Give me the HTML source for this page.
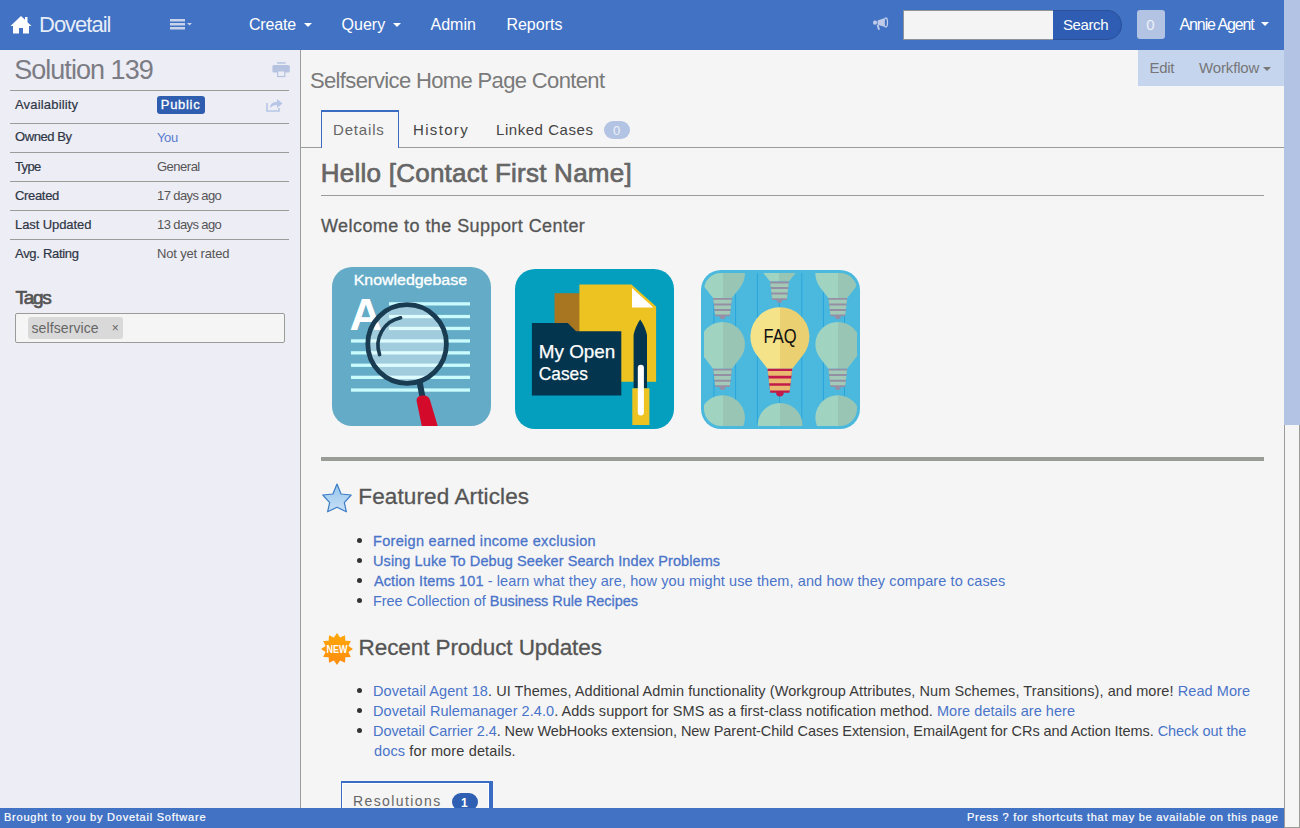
<!DOCTYPE html>
<html><head><meta charset="utf-8">
<style>
*{box-sizing:border-box}
html,body{margin:0;padding:0;width:1300px;height:828px;overflow:hidden;background:#f5f5f5;font-family:"Liberation Sans",sans-serif}
.a{position:absolute}
.t{position:absolute;line-height:1;white-space:nowrap}
.sb{-webkit-text-stroke:0.3px currentColor}
.sl{-webkit-text-stroke:0.2px currentColor}
.sh{-webkit-text-stroke:0.7px currentColor}
#nav{left:0;top:0;width:1284px;height:50px;background:#4272c4}
#side{left:0;top:50px;width:300px;height:758px;background:#ededf5}
#sideb{left:300px;top:50px;width:1px;height:758px;background:#9a9d97}
.hl{position:absolute;height:1px;background:#9a9d97}
.lab{font-size:13px;color:#2f3746}
.val{font-size:13px;color:#555}
.caret{position:absolute;width:0;height:0;border-left:4px solid transparent;border-right:4px solid transparent;border-top:4px solid #fff}
#foot{left:0;top:808px;width:1284px;height:20px;background:#4272c4}
#sbar{left:1284px;top:0;width:16px;height:828px;background:#f5f5f5;border-left:1px solid #9a9d97;border-right:1px solid #9a9d97;border-bottom:1px solid #9a9d97}
#thumb{left:1284px;top:0;width:16px;height:425px;background:#b3c3e3}
.li{font-size:14.5px;color:#3a3a3a}
.lk{color:#4a74c9}
.bul{position:absolute;width:5px;height:5px;border-radius:50%;background:#333}
</style></head><body>
<!-- NAVBAR -->
<div id="nav" class="a"></div>
<svg class="a" style="left:10px;top:16px" width="22" height="18" viewBox="0 0 22 18"><path d="M11 0 L0.5 10 L3 10 L3 17.5 L9 17.5 L9 12 L13 12 L13 17.5 L19 17.5 L19 10 L21.5 10 L17.5 6.2 L17.5 1 L15 1 L15 3.8 Z" fill="#fff"/></svg>
<div class="t" style="left:39.00px;top:13.7px;font-size:22px;color:rgba(255,255,255,0.88);letter-spacing:-1.011px">Dovetail</div>
<svg class="a" style="left:170px;top:19px" width="24" height="12" viewBox="0 0 24 12"><g fill="#c8d2ea"><rect x="0" y="0" width="15" height="2.5"/><rect x="0" y="4" width="15" height="2.5"/><rect x="0" y="8" width="15" height="2.5"/><path d="M17 4 L22 4 L19.5 6.5Z"/></g></svg>
<div class="t" style="left:249.00px;top:17.4px;font-size:16px;color:#fff;letter-spacing:-0.200px">Create</div>
<div class="caret" style="left:304px;top:23px"></div>
<div class="t" style="left:341.60px;top:17.4px;font-size:16px;color:#fff;letter-spacing:-0.000px">Query</div>
<div class="caret" style="left:393px;top:23px"></div>
<div class="t" style="left:430.50px;top:17.4px;font-size:16px;color:#fff;letter-spacing:-0.000px">Admin</div>
<div class="t" style="left:506.40px;top:17.4px;font-size:16px;color:#fff;letter-spacing:0.005px">Reports</div>
<svg class="a" style="left:873px;top:17px" width="16" height="13" viewBox="0 0 16 13"><g fill="#bfcbe8"><rect x="0" y="3.4" width="4" height="4.4" rx="1.8"/><path d="M4.6 3.4 L11.2 1.2 L11.2 9.8 L4.6 7.8Z"/><path d="M3.7 8 L5.6 8 L7 12.7 L5 12.7Z"/></g><ellipse cx="12.8" cy="5.5" rx="1.7" ry="4.5" fill="none" stroke="#bfcbe8" stroke-width="1.3"/></svg>
<div class="a" style="left:903px;top:10px;width:151px;height:30px;background:#f4f4f4;border:1px solid #8f949a"></div>
<div class="a" style="left:1053px;top:10px;width:69px;height:30px;background:#2e5db3;border:1px solid #2a519a;border-left:none;border-radius:0 15px 15px 0"></div>
<div class="t" style="left:1063.00px;top:17.3px;font-size:15px;color:#fff;letter-spacing:-0.400px">Search</div>
<div class="a" style="left:1137px;top:10px;width:28px;height:29px;background:#b3c3e3;border-radius:3px"></div>
<div class="t" style="left:1146.2px;top:16.7px;font-size:15px;color:#eef1f8">0</div>
<div class="t" style="left:1179.50px;top:17.2px;font-size:16px;color:#fff;letter-spacing:-1.100px">Annie Agent</div>
<div class="caret" style="left:1261px;top:22px"></div>

<!-- SIDEBAR -->
<div id="side" class="a"></div>
<div id="sideb" class="a"></div>
<div class="t" style="left:14.20px;top:57px;font-size:27px;color:#7c7c84;letter-spacing:-0.965px">Solution 139</div>
<svg class="a" style="left:272px;top:62px" width="18" height="16" viewBox="0 0 18 16"><g fill="#b6c3e0"><rect x="5" y="0.2" width="8.6" height="1.5"/><rect x="0.4" y="2.9" width="17.4" height="7.7" rx="1.5"/></g><rect x="5.6" y="8.9" width="7.2" height="5.6" fill="#ededf5" stroke="#b6c3e0" stroke-width="1.2"/></svg>
<div class="hl" style="left:10px;top:90px;width:279px"></div>
<div class="hl" style="left:10px;top:123px;width:279px"></div>
<div class="hl" style="left:10px;top:152px;width:279px"></div>
<div class="hl" style="left:10px;top:181px;width:279px"></div>
<div class="hl" style="left:10px;top:210px;width:279px"></div>
<div class="hl" style="left:10px;top:239px;width:279px"></div>
<div class="t lab sl" style="left:15.00px;top:98.2px;letter-spacing:0.176px">Availability</div>
<div class="a" style="left:157px;top:96px;width:48px;height:18px;background:#2f5db0;border-radius:3px"></div>
<div class="t sb" style="left:160.8px;top:97.6px;font-size:13px;color:#fff;letter-spacing:0.7px">Public</div>
<svg class="a" style="left:266px;top:98px" width="17" height="14" viewBox="0 0 17 14"><path d="M1 5 L1 13 L13 13 L13 10" fill="none" stroke="#b6c6e6" stroke-width="1.6"/><path d="M4 10 C4 5 8 4 11 4 L11 1 L16.5 5.5 L11 10 L11 7 C8 7 6 8 4 10Z" fill="#b6c6e6"/></svg>
<div class="t lab sl" style="left:15.00px;top:130.4px;letter-spacing:-0.427px">Owned By</div>
<div class="t val" style="left:157px;top:130.9px;color:#5a7bd0;letter-spacing:-0.4px">You</div>
<div class="t lab sl" style="left:15.00px;top:160.4px;letter-spacing:-0.669px">Type</div>
<div class="t val" style="left:157.00px;top:160.4px;letter-spacing:-0.500px">General</div>
<div class="t lab sl" style="left:15.00px;top:189px;letter-spacing:-0.328px">Created</div>
<div class="t val" style="left:157.00px;top:189px;letter-spacing:-0.600px">17 days ago</div>
<div class="t lab sl" style="left:15.00px;top:218.2px;letter-spacing:-0.085px">Last Updated</div>
<div class="t val" style="left:157.00px;top:218.2px;letter-spacing:-0.600px">13 days ago</div>
<div class="t lab sl" style="left:15.00px;top:247.3px;letter-spacing:-0.300px">Avg. Rating</div>
<div class="t val" style="left:157.00px;top:247.3px;letter-spacing:-0.163px">Not yet rated</div>
<div class="t sh" style="left:15.50px;top:287.9px;font-size:19px;color:#555;letter-spacing:-1.333px">Tags</div>
<div class="a" style="left:15px;top:313px;width:270px;height:30px;background:#f5f5f5;border:1px solid #9a9d97;border-radius:2px"></div>
<div class="a" style="left:28px;top:317px;width:95px;height:22px;background:#d9d9d9;border-radius:3px"></div>
<div class="t" style="left:31.50px;top:320.6px;font-size:14px;color:#666;letter-spacing:0.100px">selfservice</div>
<div class="t" style="left:111.8px;top:321.8px;font-size:12px;color:#666">×</div>

<!-- MAIN -->
<div class="t" style="left:310.00px;top:70.1px;font-size:22px;color:#7a7a7a;letter-spacing:-0.643px">Selfservice Home Page Content</div>
<div class="a" style="left:1138px;top:50px;width:146px;height:36px;background:#c5d5ee"></div>
<div class="t" style="left:1149.50px;top:60.3px;font-size:15px;color:#777;letter-spacing:-0.333px">Edit</div>
<div class="t" style="left:1199.00px;top:60.3px;font-size:15px;color:#777;letter-spacing:-0.142px">Workflow</div>
<div class="caret" style="left:1263px;top:67px;border-top-color:#777"></div>

<div class="hl" style="left:301px;top:147px;width:983px"></div>
<div class="a" style="left:321px;top:110px;width:78px;height:38px;background:#f5f5f5;border:1px solid #3a6cc4;border-top:2px solid #3a6cc4;border-bottom:none"></div>
<div class="t" style="left:333.00px;top:122.3px;font-size:15px;color:#666;letter-spacing:0.833px">Details</div>
<div class="t" style="left:413.00px;top:121.5px;font-size:15px;color:#444;letter-spacing:1.328px">History</div>
<div class="t" style="left:496.00px;top:121.5px;font-size:15px;color:#444;letter-spacing:0.545px">Linked Cases</div>
<div class="a" style="left:604px;top:121px;width:26px;height:18px;background:#b3c3e3;border-radius:9px"></div>
<div class="t" style="left:613px;top:124px;font-size:13px;color:#eef1f8">0</div>

<div class="t sh" style="left:320.80px;top:159.5px;font-size:26px;color:#666;letter-spacing:0.240px">Hello [Contact First Name]</div>
<div class="hl" style="left:321px;top:195px;width:943px"></div>
<div class="t sb" style="left:321.00px;top:216.7px;font-size:18px;color:#555;letter-spacing:0.429px">Welcome to the Support Center</div>

<!-- ICONS placeholder -->
<svg class="a" style="left:332px;top:267px" width="159" height="159" viewBox="0 0 159 159">
<defs><clipPath id="kbc"><rect width="159" height="159" rx="20"/></clipPath><clipPath id="lensc"><circle cx="75.1" cy="77" r="39"/></clipPath></defs>
<g clip-path="url(#kbc)">
<rect width="159" height="159" fill="#63abc7"/>
<text x="21.7" y="17.8" font-size="15.4" fill="#fff" stroke="#fff" stroke-width="0.35" font-family="Liberation Sans" textLength="113.3" lengthAdjust="spacingAndGlyphs">Knowledgebase</text>
<text x="17.5" y="62.7" font-size="45" font-weight="bold" fill="#fff" font-family="Liberation Sans">A</text>
<g fill="#c9fbfd">
<rect x="57" y="35.2" width="81" height="3.3"/>
<rect x="57" y="47.9" width="81" height="3.3"/>
<rect x="57" y="59.8" width="81" height="3.3"/>
<rect x="19" y="72.3" width="119" height="3.3"/>
<rect x="19" y="84.2" width="119" height="3.3"/>
<rect x="19" y="96.6" width="119" height="3.3"/>
<rect x="19" y="108.7" width="119" height="3.3"/>
<rect x="19" y="121.4" width="119" height="3.3"/>
</g>
<circle cx="75.1" cy="77" r="39.3" fill="#ffffff" fill-opacity="0.4"/>
<circle cx="75.1" cy="77" r="39.3" fill="none" stroke="#1a3c52" stroke-width="4.8"/>
<path d="M68.6 50.8 A28 28 0 0 0 47.6 87.6" fill="none" stroke="#1a3c52" stroke-width="3.6" stroke-linecap="round"/>
<path d="M84.5 115.5 L90.8 115.5 L93.5 130 L87.5 130 Z" fill="#1a3c52"/>
<path d="M84.8 135 Q83.5 129.5 90 128.6 Q96.5 127.8 98 133 L106 160 L90 160 Z" fill="#d40a2a"/>
</g>
</svg>

<svg class="a" style="left:515px;top:269px" width="159" height="160" viewBox="0 0 159 160">
<rect width="159" height="160" rx="20" fill="#049fbe"/>
<rect x="39.5" y="24.2" width="26" height="40" fill="#a87520"/>
<path d="M64.4 15.6 H116.4 L141.1 37.6 V112.8 H64.4Z" fill="#ecc321"/>
<path d="M117 19 V38.5 H138.4Z" fill="#ffffff"/>
<path d="M16.9 54 H52.8 L61 62.2 H106.3 V126.6 H16.9Z" fill="#03354f"/>
<text x="23.8" y="88.8" font-size="18.5" fill="#fff" stroke="#fff" stroke-width="0.25" font-family="Liberation Sans" textLength="76.5" lengthAdjust="spacingAndGlyphs">My Open</text>
<text x="23.8" y="111" font-size="18.5" fill="#fff" stroke="#fff" stroke-width="0.25" font-family="Liberation Sans" textLength="49" lengthAdjust="spacingAndGlyphs">Cases</text>
<path d="M118.6 119.3 V66 Q120 58 125.2 50.4 Q130.5 58 132 66 V119.3Z" fill="#03354f"/>
<rect x="117.3" y="119.3" width="17.1" height="36.7" fill="#ecc321"/>
<rect x="122.8" y="95.8" width="6.1" height="50.6" rx="3" fill="#ffffff"/>
</svg>

<svg class="a" style="left:701px;top:270px" width="159" height="159" viewBox="0 0 159 159">
<defs><clipPath id="fqc"><rect x="3" y="3" width="153" height="153" rx="17"/></clipPath><linearGradient id="pg" x1="0" x2="1" y1="0" y2="0"><stop offset="0.5" stop-color="#a1d3c1"/><stop offset="0.5" stop-color="#99c5b4"/></linearGradient><linearGradient id="yg" x1="0" x2="1" y1="0" y2="0"><stop offset="0.5" stop-color="#f5e38a"/><stop offset="0.5" stop-color="#ebd072"/></linearGradient></defs>
<rect width="159" height="159" rx="20" fill="#4bb9de"/>
<g clip-path="url(#fqc)">
<rect x="12.4" y="0" width="1" height="159" fill="#2aa5dc"/>
<rect x="34.1" y="0" width="1" height="159" fill="#2aa5dc"/>
<rect x="55.9" y="0" width="1" height="159" fill="#2aa5dc"/>
<rect x="78.0" y="0" width="1" height="159" fill="#2aa5dc"/>
<rect x="100.3" y="0" width="1" height="159" fill="#2aa5dc"/>
<rect x="121.9" y="0" width="1" height="159" fill="#2aa5dc"/>
<rect x="143.0" y="0" width="1" height="159" fill="#2aa5dc"/>
<path d="M12.10 28.00 L4.20 17.90 A22.40 22.40 0 1 1 38.80 17.90 L30.90 28.00 Z" fill="url(#pg)"/>
<path d="M12.10 28.00 L30.90 28.00 L28.80 46.30 L14.20 46.30 Z" fill="#958fa6"/>
<circle cx="21.50" cy="46.30" r="2.9" fill="#958fa6"/>
<path d="M12.31 29.80 L30.69 29.80 L30.28 33.40 L12.72 33.40Z" fill="#a3cab7"/>
<path d="M12.95 35.40 L30.05 35.40 L29.64 39.00 L13.36 39.00Z" fill="#a3cab7"/>
<path d="M13.59 41.00 L29.41 41.00 L29.00 44.60 L14.00 44.60Z" fill="#a3cab7"/>
<path d="M12.10 98.70 L4.20 88.60 A22.40 22.40 0 1 1 38.80 88.60 L30.90 98.70 Z" fill="url(#pg)"/>
<path d="M12.10 98.70 L30.90 98.70 L28.80 117.00 L14.20 117.00 Z" fill="#958fa6"/>
<circle cx="21.50" cy="117.00" r="2.9" fill="#958fa6"/>
<path d="M12.31 100.50 L30.69 100.50 L30.28 104.10 L12.72 104.10Z" fill="#a3cab7"/>
<path d="M12.95 106.10 L30.05 106.10 L29.64 109.70 L13.36 109.70Z" fill="#a3cab7"/>
<path d="M13.59 111.70 L29.41 111.70 L29.00 115.30 L14.00 115.30Z" fill="#a3cab7"/>
<path d="M12.10 171.90 L4.20 161.80 A22.40 22.40 0 1 1 38.80 161.80 L30.90 171.90 Z" fill="url(#pg)"/>
<path d="M12.10 171.90 L30.90 171.90 L28.80 190.20 L14.20 190.20 Z" fill="#958fa6"/>
<circle cx="21.50" cy="190.20" r="2.9" fill="#958fa6"/>
<path d="M12.31 173.70 L30.69 173.70 L30.28 177.30 L12.72 177.30Z" fill="#a3cab7"/>
<path d="M12.95 179.30 L30.05 179.30 L29.64 182.90 L13.36 182.90Z" fill="#a3cab7"/>
<path d="M13.59 184.90 L29.41 184.90 L29.00 188.50 L14.00 188.50Z" fill="#a3cab7"/>
<path d="M69.10 11.60 L61.20 1.50 A22.40 22.40 0 1 1 95.80 1.50 L87.90 11.60 Z" fill="url(#pg)"/>
<path d="M69.10 11.60 L87.90 11.60 L85.80 29.90 L71.20 29.90 Z" fill="#958fa6"/>
<circle cx="78.50" cy="29.90" r="2.9" fill="#958fa6"/>
<path d="M69.31 13.40 L87.69 13.40 L87.28 17.00 L69.72 17.00Z" fill="#a3cab7"/>
<path d="M69.95 19.00 L87.05 19.00 L86.64 22.60 L70.36 22.60Z" fill="#a3cab7"/>
<path d="M70.59 24.60 L86.41 24.60 L86.00 28.20 L71.00 28.20Z" fill="#a3cab7"/>
<path d="M69.70 179.70 L61.80 169.60 A22.40 22.40 0 1 1 96.40 169.60 L88.50 179.70 Z" fill="url(#pg)"/>
<path d="M69.70 179.70 L88.50 179.70 L86.40 198.00 L71.80 198.00 Z" fill="#958fa6"/>
<circle cx="79.10" cy="198.00" r="2.9" fill="#958fa6"/>
<path d="M69.91 181.50 L88.29 181.50 L87.88 185.10 L70.32 185.10Z" fill="#a3cab7"/>
<path d="M70.55 187.10 L87.65 187.10 L87.24 190.70 L70.96 190.70Z" fill="#a3cab7"/>
<path d="M71.19 192.70 L87.01 192.70 L86.60 196.30 L71.60 196.30Z" fill="#a3cab7"/>
<path d="M127.40 28.00 L119.50 17.90 A22.40 22.40 0 1 1 154.10 17.90 L146.20 28.00 Z" fill="url(#pg)"/>
<path d="M127.40 28.00 L146.20 28.00 L144.10 46.30 L129.50 46.30 Z" fill="#958fa6"/>
<circle cx="136.80" cy="46.30" r="2.9" fill="#958fa6"/>
<path d="M127.61 29.80 L145.99 29.80 L145.58 33.40 L128.02 33.40Z" fill="#a3cab7"/>
<path d="M128.25 35.40 L145.35 35.40 L144.94 39.00 L128.66 39.00Z" fill="#a3cab7"/>
<path d="M128.89 41.00 L144.71 41.00 L144.30 44.60 L129.30 44.60Z" fill="#a3cab7"/>
<path d="M127.40 98.70 L119.50 88.60 A22.40 22.40 0 1 1 154.10 88.60 L146.20 98.70 Z" fill="url(#pg)"/>
<path d="M127.40 98.70 L146.20 98.70 L144.10 117.00 L129.50 117.00 Z" fill="#958fa6"/>
<circle cx="136.80" cy="117.00" r="2.9" fill="#958fa6"/>
<path d="M127.61 100.50 L145.99 100.50 L145.58 104.10 L128.02 104.10Z" fill="#a3cab7"/>
<path d="M128.25 106.10 L145.35 106.10 L144.94 109.70 L128.66 109.70Z" fill="#a3cab7"/>
<path d="M128.89 111.70 L144.71 111.70 L144.30 115.30 L129.30 115.30Z" fill="#a3cab7"/>
<path d="M127.40 171.90 L119.50 161.80 A22.40 22.40 0 1 1 154.10 161.80 L146.20 171.90 Z" fill="url(#pg)"/>
<path d="M127.40 171.90 L146.20 171.90 L144.10 190.20 L129.50 190.20 Z" fill="#958fa6"/>
<circle cx="136.80" cy="190.20" r="2.9" fill="#958fa6"/>
<path d="M127.61 173.70 L145.99 173.70 L145.58 177.30 L128.02 177.30Z" fill="#a3cab7"/>
<path d="M128.25 179.30 L145.35 179.30 L144.94 182.90 L128.66 182.90Z" fill="#a3cab7"/>
<path d="M128.89 184.90 L144.71 184.90 L144.30 188.50 L129.30 188.50Z" fill="#a3cab7"/>
<path d="M66.52 98.70 L56.12 85.40 A29.50 29.50 0 1 1 101.68 85.40 L91.28 98.70 Z" fill="url(#yg)"/>
<path d="M66.52 98.70 L91.28 98.70 L88.51 122.80 L69.29 122.80 Z" fill="#c21a4a"/>
<circle cx="78.90" cy="122.80" r="3.8" fill="#c21a4a"/>
<path d="M66.79 101.07 L91.01 101.07 L90.46 105.82 L67.34 105.82Z" fill="#e9bb70"/>
<path d="M67.64 108.45 L90.16 108.45 L89.62 113.19 L68.18 113.19Z" fill="#e9bb70"/>
<path d="M68.48 115.82 L89.32 115.82 L88.77 120.57 L69.03 120.57Z" fill="#e9bb70"/>
</g>
<text x="62.5" y="72.5" font-size="19.6" fill="#111" font-family="Liberation Sans" textLength="33" lengthAdjust="spacingAndGlyphs">FAQ</text>
</svg>

<div class="a" style="left:321px;top:457px;width:943px;height:4px;background:#9a9d97"></div>

<svg class="a" style="left:322px;top:483px" width="30" height="30" viewBox="0 0 30 30"><defs><linearGradient id="sg" x1="0" y1="0" x2="0" y2="1"><stop offset="0" stop-color="#96c5ec"/><stop offset="1" stop-color="#c8e0f6"/></linearGradient></defs><path d="M15 1 L19.1 11 L29.2 12 L22.3 19.6 L24.4 28.8 L15 24.3 L5.6 28.8 L7.7 19.6 L0.8 12 L10.9 11 Z" fill="url(#sg)" stroke="#3b7cc8" stroke-width="1.2" stroke-linejoin="round"/></svg>
<div class="t sb" style="left:358.30px;top:486.4px;font-size:22.5px;color:#555;letter-spacing:0.122px">Featured Articles</div>

<div class="bul" style="left:357px;top:538px"></div>
<div class="t li lk sb" style="left:373.00px;top:533.7px;letter-spacing:0.300px">Foreign earned income exclusion</div>
<div class="bul" style="left:357px;top:558px"></div>
<div class="t li lk sb" style="left:373.00px;top:553.7px;letter-spacing:0.085px">Using Luke To Debug Seeker Search Index Problems</div>
<div class="bul" style="left:357px;top:578px"></div>
<div class="t li lk" style="left:374.00px;top:573.7px;letter-spacing:0.098px"><span class="sb">Action Items 101</span> - learn what they are, how you might use them, and how they compare to cases</div>
<div class="bul" style="left:357px;top:598px"></div>
<div class="t li lk" style="left:373.00px;top:593.7px;letter-spacing:-0.045px">Free Collection of <span class="sb">Business Rule Recipes</span></div>

<svg class="a" style="left:321px;top:633px" width="32" height="32" viewBox="0 0 32 32"><defs><linearGradient id="ng" x1="0" y1="0" x2="0" y2="1"><stop offset="0" stop-color="#ffa808"/><stop offset="1" stop-color="#ff8c10"/></linearGradient></defs><polygon points="16.00,0.00 19.05,4.60 24.00,2.14 24.34,7.66 29.86,8.00 27.40,12.95 32.00,16.00 27.40,19.05 29.86,24.00 24.34,24.34 24.00,29.86 19.05,27.40 16.00,32.00 12.95,27.40 8.00,29.86 7.66,24.34 2.14,24.00 4.60,19.05 0.00,16.00 4.60,12.95 2.14,8.00 7.66,7.66 8.00,2.14 12.95,4.60" fill="url(#ng)"/><text x="16" y="19.6" font-size="10" font-weight="bold" fill="#fff" text-anchor="middle" font-family="Liberation Sans" textLength="21" lengthAdjust="spacingAndGlyphs">NEW</text></svg>
<div class="t sb" style="left:358.60px;top:636.5px;font-size:22.5px;color:#555;letter-spacing:-0.086px">Recent Product Updates</div>

<div class="bul" style="left:357px;top:688px"></div>
<div class="t li" style="left:373.00px;top:683.5px;letter-spacing:0.074px"><span class="lk">Dovetail Agent 18</span>. UI Themes, Additional Admin functionality (Workgroup Attributes, Num Schemes, Transitions), and more! <span class="lk">Read More</span></div>
<div class="bul" style="left:357px;top:708px"></div>
<div class="t li" style="left:373.00px;top:703.5px;letter-spacing:0.053px"><span class="lk">Dovetail Rulemanager 2.4.0</span>. Adds support for SMS as a first-class notification method. <span class="lk">More details are here</span></div>
<div class="bul" style="left:357px;top:728px"></div>
<div class="t li" style="left:373.00px;top:723.5px;letter-spacing:-0.062px"><span class="lk">Dovetail Carrier 2.4</span>. New WebHooks extension, New Parent-Child Cases Extension, EmailAgent for CRs and Action Items. <span class="lk">Check out the</span></div>
<div class="t li" style="left:374.00px;top:743.5px;letter-spacing:0.143px"><span class="lk">docs</span> for more details.</div>

<div class="a" style="left:341px;top:781px;width:152px;height:30px;border:1px solid #3a6cc4;border-top:2px solid #3a6cc4;border-right:4px solid #3a6cc4;box-shadow:inset 1px 1px 0 #fff,inset -1px 0 0 #fff"></div>
<div class="t" style="left:353.00px;top:793.9px;font-size:14px;color:#666;letter-spacing:1.400px">Resolutions</div>
<div class="a" style="left:452px;top:793px;width:26px;height:18px;background:#2f5fb3;border-radius:9px"></div>
<div class="t" style="left:461px;top:797px;font-size:12px;color:#fff;font-weight:bold">1</div>

<div id="foot" class="a"></div>
<div class="t sl" style="left:4.00px;top:812.1px;font-size:11px;color:#fff;letter-spacing:0.765px">Brought to you by Dovetail Software</div>
<div class="t sl" style="left:967.00px;top:812.1px;font-size:11px;color:#fff;letter-spacing:0.727px">Press ? for shortcuts that may be available on this page</div>

<div id="sbar" class="a"></div>
<div id="thumb" class="a"></div>
</body></html>
